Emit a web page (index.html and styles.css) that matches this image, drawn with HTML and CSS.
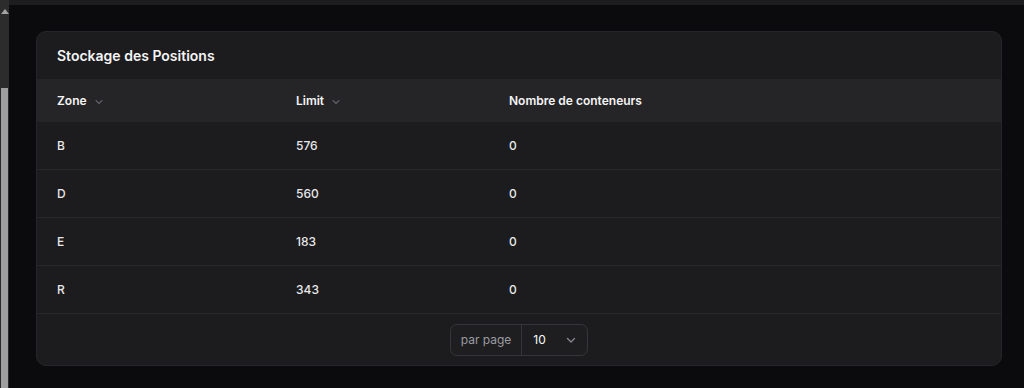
FILE: index.html
```html
<!DOCTYPE html>
<html lang="fr">
<head>
<meta charset="UTF-8">
<title>Stockage des Positions</title>
<link rel="stylesheet" href="styles.css">
</head>
<body>
<div class="scrollbar">
	<div class="scroll-up"></div>
	<div class="scroll-thumb"></div>
</div>
<div class="main">
	<div class="topbar"></div>
	<div class="content">
		<div class="card">
			<h2 class="card-title">Stockage des Positions</h2>
			<table class="grid">
				<thead>
					<tr>
						<th class="col-zone">Zone <span class="sort"><svg viewBox="0 0 12 12" width="12" height="12"><path d="M3 4.5 6 7.5l3-3" fill="none" stroke="currentColor" stroke-width="1.1" stroke-linecap="round" stroke-linejoin="round"/></svg></span></th>
						<th class="col-limit">Limit <span class="sort"><svg viewBox="0 0 12 12" width="12" height="12"><path d="M3 4.5 6 7.5l3-3" fill="none" stroke="currentColor" stroke-width="1.1" stroke-linecap="round" stroke-linejoin="round"/></svg></span></th>
						<th>Nombre de conteneurs</th>
					</tr>
				</thead>
				<tbody>
					<tr><td>B</td><td>576</td><td>0</td></tr>
					<tr><td>D</td><td>560</td><td>0</td></tr>
					<tr><td>E</td><td>183</td><td>0</td></tr>
					<tr><td>R</td><td>343</td><td>0</td></tr>
				</tbody>
			</table>
			<div class="card-footer">
				<div class="per-page">
					<span class="per-page-label">par page</span>
					<span class="per-page-select">10
						<svg viewBox="0 0 12 12" width="12" height="12"><path d="M2.5 4.5 6 8l3.5-3.5" fill="none" stroke="currentColor" stroke-width="1.3" stroke-linecap="round" stroke-linejoin="round"/></svg>
					</span>
				</div>
			</div>
		</div>
	</div>
</div>
</body>
</html>
```

FILE: styles.css
```css
html, body {
	height: 100%;
}

body {
	margin: 0;
	display: flex;
	background-color: #0b0b0d;
	font-family: Inter, "Noto Sans", Arial, sans-serif;
	color: #f4f4f5;
	overflow: hidden;
}

/* left scrollbar */
.scrollbar {
	width: 9px;
	flex: none;
	display: flex;
	flex-direction: column;
	align-items: center;
	background-color: #2c2c2c;
}

.scroll-up {
	width: 0;
	height: 0;
	margin-top: 9px;
	border-left: 4px solid transparent;
	border-right: 4px solid transparent;
	border-bottom: 5px solid #a3a3a3;
}

.scroll-thumb {
	width: 7px;
	margin-top: 74px;
	flex: 1;
	background-color: #9f9f9f;
}

.main {
	flex: 1;
	display: flex;
	flex-direction: column;
}

.topbar {
	height: 5px;
	background-color: #1d1d20;
}

.content {
	padding: 26px 22px 0 27px;
}

.card {
	background-color: #1c1c1e;
	border: 1px solid #26262a;
	border-radius: 10px;
	overflow: hidden;
}

.card-title {
	margin: 0;
	height: 47px;
	padding: 0 20px;
	display: flex;
	align-items: center;
	font-size: 14px;
	font-weight: 600;
	color: #f4f4f5;
}

table.grid {
	width: 100%;
	border-collapse: collapse;
	font-size: 12px;
}

.grid th {
	height: 43px;
	padding: 0 20px;
	text-align: left;
	font-weight: 600;
	color: #f4f4f5;
	background-color: #252527;
}

.grid th.col-zone {
	width: 199px;
}

.grid th.col-limit {
	width: 173px;
}

.sort {
	display: inline-flex;
	vertical-align: middle;
	margin-left: 3px;
	color: #5f5f66;
}

.grid td {
	height: 47px;
	padding: 0 20px;
	font-weight: 500;
	color: #e8e8eb;
	border-bottom: 1px solid #28282b;
}

.card-footer {
	height: 51px;
	display: flex;
	align-items: center;
	justify-content: center;
}

.per-page {
	display: flex;
	height: 30px;
	border: 1px solid #36363a;
	border-radius: 7px;
	font-size: 12px;
	background-color: #1e1e20;
}

.per-page-label {
	display: flex;
	align-items: center;
	padding: 0 10px;
	color: #9b9ba1;
	border-right: 1px solid #36363a;
}

.per-page-select {
	display: flex;
	align-items: center;
	justify-content: space-between;
	width: 44px;
	padding: 0 10px 0 11px;
	color: #fafafa;
}

.per-page-select svg {
	color: #8a8a90;
}
```
